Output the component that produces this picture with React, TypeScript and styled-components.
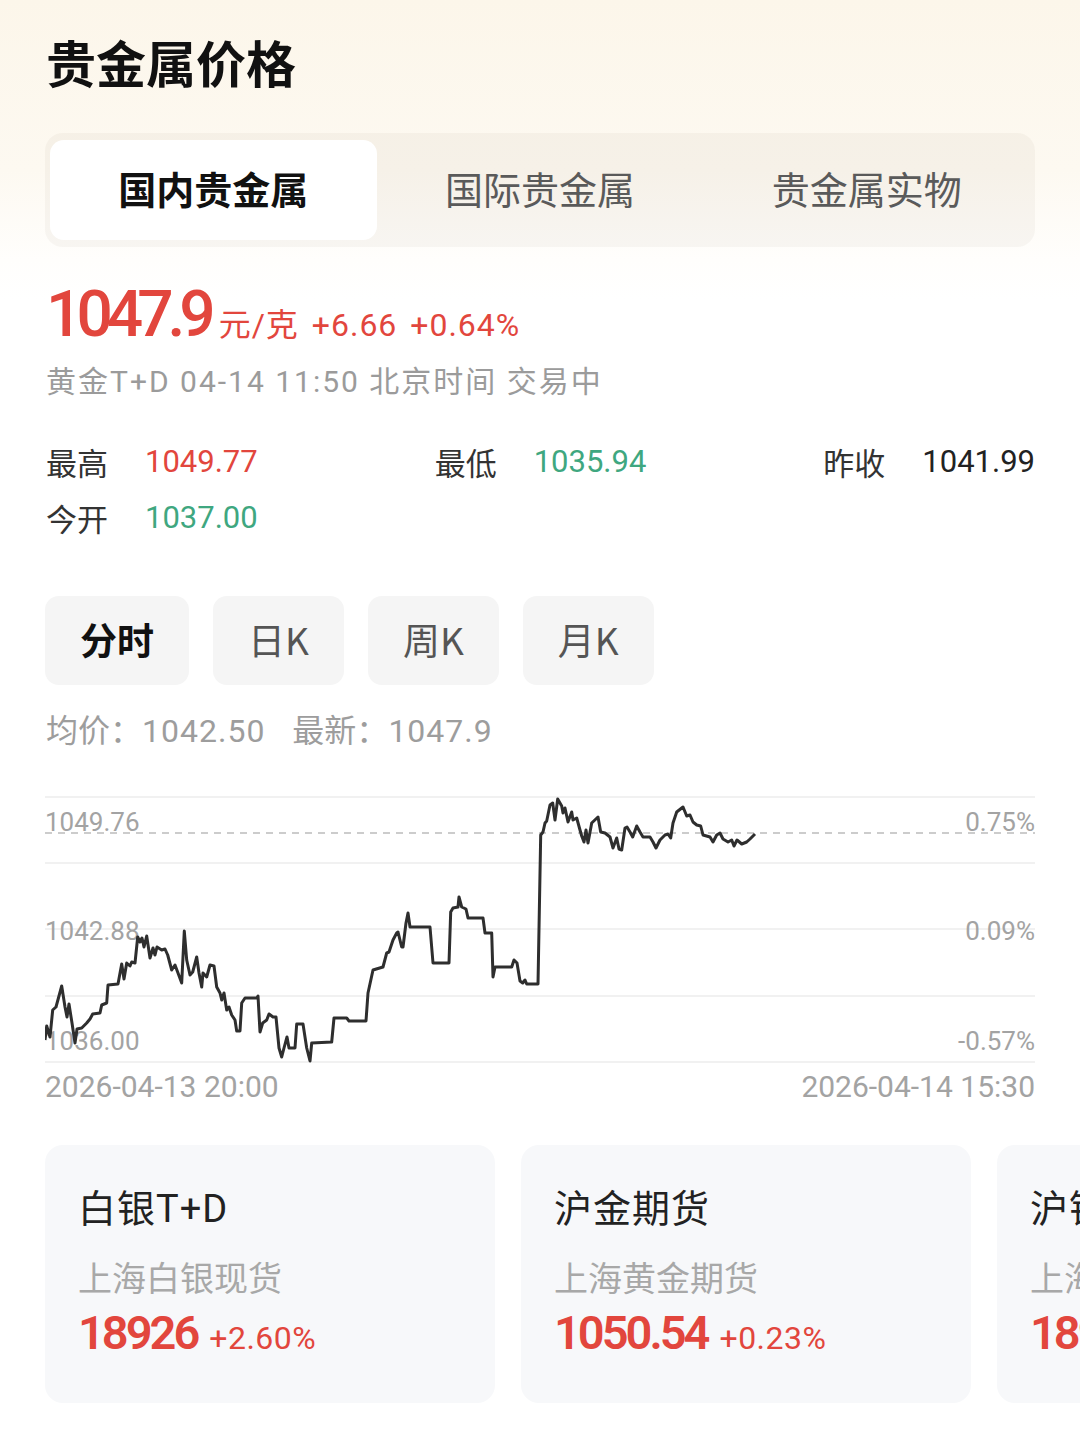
import React, { useState } from "react";
import styled, { createGlobalStyle } from "styled-components";

const GlobalStyle = createGlobalStyle`
  html, body {
    margin: 0;
    padding: 0;
    background: #fff;
  }
  body {
    font-family: "Noto Sans CJK SC", "Noto Sans", sans-serif;
    color: #222;
  }
`;

const RED = "#e2463d";
const GREEN = "#3fa780";
const NUM_FONT = `Roboto, "Noto Sans CJK SC", sans-serif`;

const Page = styled.div`
  width: 1080px;
  min-height: 1442px;
  box-sizing: border-box;
  padding: 31px 45px 0;
  overflow: hidden;
  background: linear-gradient(180deg, #fcf6ea 0px, #fdf9f1 170px, #fffefc 260px, #fff 300px);
`;

const Title = styled.h1`
  margin: 0 0 0 1px;
  font-size: 50px;
  line-height: 60px;
  font-weight: 700;
  color: #111;
`;

const TabBar = styled.div`
  margin-top: 42px;
  height: 114px;
  box-sizing: border-box;
  padding: 7px 5px;
  display: grid;
  grid-template-columns: repeat(3, 1fr);
  border-radius: 18px;
  background: rgba(120, 100, 70, 0.05);
`;

const Tab = styled.div<{ $active?: boolean }>`
  display: flex;
  align-items: center;
  justify-content: center;
  padding-bottom: 6px;
  border-radius: 14px;
  font-size: 38px;
  font-weight: ${(p) => (p.$active ? 700 : 400)};
  color: ${(p) => (p.$active ? "#111" : "#5a5a5a")};
  background: ${(p) => (p.$active ? "#fff" : "transparent")};
`;

const PriceRow = styled.div`
  margin-top: 35px;
  margin-left: 1px;
  display: flex;
  align-items: baseline;
  gap: 9px;
  color: ${RED};
  height: 66px;
`;

const BigPrice = styled.span`
  font-family: ${NUM_FONT};
  font-size: 64px;
  line-height: 66px;
  font-weight: 500;
  letter-spacing: -6px;
`;

const PriceMeta = styled.span`
  font-family: ${NUM_FONT};
  font-size: 32px;
  letter-spacing: 1px;
  word-spacing: 4px;
`;

const SubLine = styled.div`
  margin: 14px 0 0 1px;
  font-family: ${NUM_FONT};
  font-size: 30px;
  line-height: 40px;
  letter-spacing: 2px;
  color: #9b9b9b;
`;

const StatRows = styled.div`
  margin-top: 39px;
  display: flex;
  flex-direction: column;
  gap: 16px;
`;

const StatRow = styled.div`
  display: flex;
  justify-content: space-between;
`;

const Stat = styled.div`
  display: flex;
  align-items: center;
  gap: 37px;
  height: 40px;
  margin-left: 1px;
`;

const StatLabel = styled.span`
  font-size: 31px;
  color: #333;
`;

const StatValue = styled.span<{ $tone: "up" | "down" | "flat" }>`
  font-family: ${NUM_FONT};
  font-size: 31px;
  color: ${(p) => (p.$tone === "up" ? RED : p.$tone === "down" ? GREEN : "#222")};
`;

const ChipRow = styled.div`
  margin-top: 59px;
  display: flex;
  gap: 24px;
`;

const Chip = styled.div<{ $active?: boolean }>`
  height: 89px;
  padding: 0 35px 4px;
  box-sizing: border-box;
  display: flex;
  align-items: center;
  border-radius: 14px;
  background: #f5f5f5;
  font-size: 37px;
  font-weight: ${(p) => (p.$active ? 700 : 400)};
  color: ${(p) => (p.$active ? "#111" : "#555")};
`;

const AvgLine = styled.div`
  margin: 23px 0 0 1px;
  font-size: 32px;
  line-height: 40px;
  color: #9d9d9d;
  display: flex;
  gap: 27px;

  b {
    font-weight: 400;
    font-family: ${NUM_FONT};
    letter-spacing: 1px;
  }
`;

const ChartBox = styled.div`
  margin-top: 39px;
  height: 280px;

  svg {
    display: block;
  }
`;

const DateRow = styled.div`
  display: flex;
  justify-content: space-between;
  font-family: ${NUM_FONT};
  font-size: 30px;
  line-height: 34px;
  color: #a3a3a3;
`;

const CardRow = styled.div`
  margin: 41px -45px 0 0;
  display: flex;
  gap: 26px;
  overflow: hidden;
`;

const Card = styled.div`
  flex: 0 0 450px;
  height: 258px;
  box-sizing: border-box;
  padding: 42px 0 0 33px;
  border-radius: 18px;
  background: #f7f8fa;
`;

const CardTitle = styled.div`
  font-family: ${NUM_FONT};
  font-size: 38px;
  line-height: 44px;
  letter-spacing: 1px;
  color: #222;
`;

const CardSub = styled.div`
  margin-top: 24px;
  font-size: 34px;
  line-height: 44px;
  color: #a8a8a8;
`;

const CardPrice = styled.div`
  margin-top: 9px;
  display: flex;
  align-items: baseline;
  gap: 12px;
  color: ${RED};
  line-height: 50px;
`;

const CardValue = styled.span`
  font-family: ${NUM_FONT};
  font-size: 47px;
  font-weight: 600;
  letter-spacing: -3px;
`;

const CardChange = styled.span`
  font-family: ${NUM_FONT};
  font-size: 32px;
  letter-spacing: 0.5px;
`;

const line: [number, number][] = [
  [45, 1040], [46.7, 1026], [50, 1037], [52.7, 1010], [56, 1007], [61.7, 986], [65, 1007],
  [67, 1017], [69, 1004], [72, 1023], [75, 1043], [77, 1029], [81.7, 1028], [86.7, 1023],
  [90, 1019], [92.7, 1014], [100, 1013], [101.7, 1005], [106.7, 1003], [108, 985], [118, 984],
  [121.7, 964], [124, 979], [126.7, 963], [130, 966], [131.7, 962], [135, 963], [137.7, 937],
  [140, 942], [142, 938], [144, 947], [146.7, 936], [150, 958], [153, 948], [155, 955],
  [157, 947], [161.7, 950], [165, 949], [167.7, 955], [171.7, 970], [175, 965], [178, 973],
  [181.7, 983], [184.3, 931], [186.7, 960], [190, 975], [192.7, 972], [196.7, 957], [199, 973],
  [201.7, 987], [203, 973], [206.7, 977], [210, 965], [214, 966], [216.7, 987], [220, 993],
  [221.7, 1000], [224, 993], [226.7, 1010], [229, 1007], [231.7, 1015], [235, 1020],
  [236.7, 1031], [240, 1031], [241.7, 1003], [245, 998], [256.7, 998], [258, 996], [260, 1032],
  [262.7, 1023], [266.7, 1020], [269, 1014], [273, 1017], [276, 1017], [279, 1048],
  [281.7, 1057], [284, 1048], [287, 1037], [289, 1048], [295, 1048], [296.7, 1024],
  [303, 1024], [306.7, 1048], [310, 1061], [311.7, 1043], [331.7, 1042], [334, 1018],
  [346.7, 1018], [349, 1021], [366, 1021], [368, 993], [373, 970], [383, 967], [386.7, 953],
  [389, 952], [393, 940], [396.7, 933], [398, 932], [401.7, 947], [403, 947], [406, 923],
  [408, 913], [410, 927], [430, 927], [433, 963], [449, 963], [450.7, 912], [453, 908],
  [458, 907], [459, 897], [461.7, 907], [466, 909], [468, 918], [483, 918], [485, 933],
  [491.7, 933], [493, 977], [495, 967], [511.7, 967], [514, 960], [517, 963], [520, 981],
  [522.7, 983], [525, 980], [526.7, 984], [538, 984], [540.7, 835], [543, 832], [545, 823],
  [546.7, 821], [550, 805], [552.7, 803], [555, 820], [557.7, 799], [561.7, 806], [563, 813],
  [565, 808], [568, 822], [571.7, 812], [573, 820], [576.7, 818], [580, 830], [581.7, 836],
  [584, 842], [586, 830], [588, 843], [591.7, 823], [598, 817], [600.7, 832], [605, 833],
  [610, 837], [613, 848], [616.7, 838], [619, 849], [621.7, 850], [625, 828], [627, 827],
  [630, 832], [632.7, 837], [636.7, 826], [640, 832], [643, 837], [650, 837], [653, 842],
  [656, 848], [660, 840], [665, 835], [668, 834], [670.7, 838], [673, 823], [676.7, 812],
  [683, 807], [686.7, 816], [690, 815], [693, 822], [696.7, 825], [700.7, 826], [703, 835],
  [710, 837], [713, 842], [716.7, 835], [720, 833], [723, 839], [728, 842], [731.7, 840],
  [734, 846], [737, 840], [741.7, 844], [746.7, 842], [750, 839], [755, 834],
];

const axis = [
  { y: 831, left: "1049.76", right: "0.75%" },
  { y: 940, left: "1042.88", right: "0.09%" },
  { y: 1050, left: "1036.00", right: "-0.57%" },
];

const gridYs = [797, 863, 929, 996, 1062];

const IntradayChart = () => {
  const d = line.map(([x, y], i) => `${i ? "L" : "M"}${x} ${y}`).join(" ");
  return (
    <svg width={990} height={280} viewBox="45 790 990 280">
      {gridYs.map((y) => (
        <line key={y} x1={45} x2={1035} y1={y} y2={y} stroke="#f1f1f1" strokeWidth={2} />
      ))}
      <line x1={45} x2={1035} y1={833} y2={833} stroke="#bcbcbc" strokeWidth={1.5} strokeDasharray="7 6" />
      {axis.map((a) => (
        <g key={a.left} fontFamily="Roboto, sans-serif" fontSize={26} fill="#a3a3a3">
          <text x={45} y={a.y}>{a.left}</text>
          <text x={1035} y={a.y} textAnchor="end">{a.right}</text>
        </g>
      ))}
      <path d={d} fill="none" stroke="#2e2e2e" strokeWidth={3} strokeLinejoin="round" />
    </svg>
  );
};

const tabs = ["国内贵金属", "国际贵金属", "贵金属实物"];
const periods = ["分时", "日K", "周K", "月K"];

const cards = [
  { name: "白银T+D", sub: "上海白银现货", value: "18926", change: "+2.60%" },
  { name: "沪金期货", sub: "上海黄金期货", value: "1050.54", change: "+0.23%" },
  { name: "沪银期货", sub: "上海白银期货", value: "18963", change: "+2.41%" },
];

export default function App() {
  const [tab, setTab] = useState(0);
  const [period, setPeriod] = useState(0);

  return (
    <>
      <GlobalStyle />
      <Page>
        <Title>贵金属价格</Title>

        <TabBar>
          {tabs.map((t, i) => (
            <Tab key={t} $active={i === tab} onClick={() => setTab(i)}>
              {t}
            </Tab>
          ))}
        </TabBar>

        <PriceRow>
          <BigPrice>1047.9</BigPrice>
          <PriceMeta>元/克 +6.66 +0.64%</PriceMeta>
        </PriceRow>
        <SubLine>黄金T+D 04-14 11:50 北京时间 交易中</SubLine>

        <StatRows>
          <StatRow>
            <Stat>
              <StatLabel>最高</StatLabel>
              <StatValue $tone="up">1049.77</StatValue>
            </Stat>
            <Stat>
              <StatLabel>最低</StatLabel>
              <StatValue $tone="down">1035.94</StatValue>
            </Stat>
            <Stat>
              <StatLabel>昨收</StatLabel>
              <StatValue $tone="flat">1041.99</StatValue>
            </Stat>
          </StatRow>
          <StatRow>
            <Stat>
              <StatLabel>今开</StatLabel>
              <StatValue $tone="down">1037.00</StatValue>
            </Stat>
          </StatRow>
        </StatRows>

        <ChipRow>
          {periods.map((p, i) => (
            <Chip key={p} $active={i === period} onClick={() => setPeriod(i)}>
              {p}
            </Chip>
          ))}
        </ChipRow>

        <AvgLine>
          <span>
            均价：<b>1042.50</b>
          </span>
          <span>
            最新：<b>1047.9</b>
          </span>
        </AvgLine>

        <ChartBox>
          <IntradayChart />
        </ChartBox>
        <DateRow>
          <span>2026-04-13 20:00</span>
          <span>2026-04-14 15:30</span>
        </DateRow>

        <CardRow>
          {cards.map((c) => (
            <Card key={c.name}>
              <CardTitle>{c.name}</CardTitle>
              <CardSub>{c.sub}</CardSub>
              <CardPrice>
                <CardValue>{c.value}</CardValue>
                <CardChange>{c.change}</CardChange>
              </CardPrice>
            </Card>
          ))}
        </CardRow>
      </Page>
    </>
  );
}
